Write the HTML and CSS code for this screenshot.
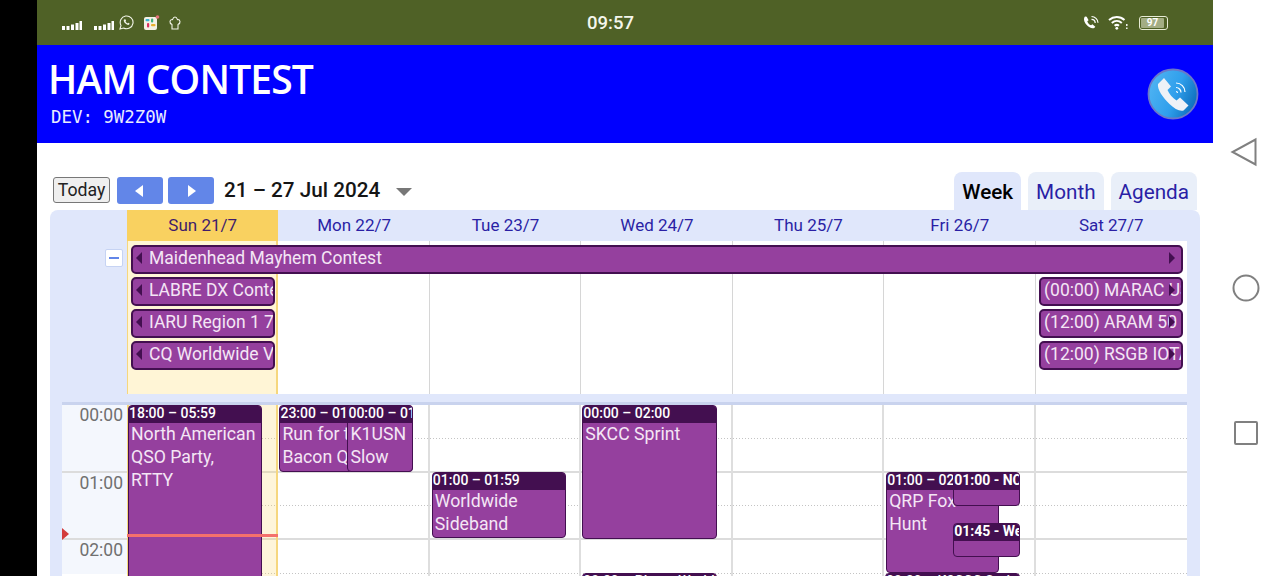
FILE: index.html
```html
<!DOCTYPE html>
<html lang="en">
<head>
  <meta charset="UTF-8" />
  <meta name="viewport" content="width=device-width, initial-scale=1.0" />
  <title>Ham Contest</title>
  <link rel="stylesheet" href="styles.css">
</head>
<body>
  <div class="screen">
    <div class="cutout"></div>

    <div class="app">
      <!-- Status bar -->
      <div class="status">
        <div class="status-left">
          <svg class="signal" width="20" height="9" viewBox="0 0 20 9"><path d="M0 5h3v4H0zM4.500 5h3v4h-3zM9 3.500h3V9H9zM13.500 2h3v7h-3zM17.500 0H20v9h-2.500z" fill="#fff"/></svg>
          <svg class="signal signal-two" width="20" height="9" viewBox="0 0 20 9"><path d="M0 5h3v4H0zM4.500 5h3v4h-3zM9 3.500h3V9H9zM13.500 2h3v7h-3zM17.500 0H20v9h-2.500z" fill="#fff"/></svg>
          <svg class="whatsapp" width="15" height="15" viewBox="0 0 15 15" fill="none" stroke="#f2f4e8" stroke-width="1.100"><path d="M1 14l1-3.600A6.400 6.400 0 1 1 4.600 13z"/><path d="M5 4.500c-.8 1 .2 3 1.500 4.100 1.300 1.100 3 1.800 3.700.8l.4-.8-1.500-.9-.7.700C7.600 8 6.900 7.300 6.500 6.300l.6-.7-.8-1.400z" fill="#f2f4e8" stroke="none"/></svg>
          <svg class="slack" width="17" height="16" viewBox="0 0 17 16">
            <rect x="1" y="2" width="13" height="13" rx="2" fill="#f4f1e6"/>
            <rect x="2.500" y="4" width="4" height="2.200" rx="1" fill="#39b5d6"/>
            <rect x="8" y="3.500" width="2.200" height="4" rx="1" fill="#3caf7c"/>
            <rect x="4" y="8" width="2.200" height="4.500" rx="1" fill="#d9315f"/>
            <rect x="8" y="9" width="4.500" height="2.200" rx="1" fill="#e8b02e"/>
            <circle cx="14.500" cy="2" r="1.800" fill="#e4727a"/>
          </svg>
          <svg class="hat" width="12" height="14" viewBox="0 0 12 14" fill="none" stroke="#f2f4e8" stroke-width="1.100"><path d="M3 13h6V8.500c1.300-.6 2.200-1.700 2-3C10.700 4 9.500 3.400 8.500 3.600 8 2.200 7 1 6 1S4 2.200 3.500 3.600C2.500 3.400 1.300 4 1 5.500.8 6.800 1.700 7.900 3 8.500z"/></svg>
        </div>
        <div class="clock">09:57</div>
        <div class="status-right">
          <svg class="call-wifi" width="17" height="15" viewBox="0 0 17 15" fill="none"><path d="M2 1.500c-1.800 2-1 5.500 1.500 8.300 2.600 2.900 6 4.300 8 2.900l.8-1-2.900-2.400-1.300 1C6.300 10 4.700 8 4.300 6.300l1.300-1.100-1.900-3.500z" fill="#fff"/><path d="M8.500 1.500a6.500 6.500 0 0 1 6.500 6.300M8.500 4.300a3.700 3.700 0 0 1 3.700 3.600" stroke="#fff" stroke-width="1.200"/></svg>
          <svg class="wifi" width="20" height="15" viewBox="0 0 20 15" fill="none" stroke="#fff" stroke-width="2"><path d="M1 5c4.600-4 11-4 15.500 0M3.800 8c3-2.600 7-2.600 10 0M6.600 10.800c1.400-1.200 3-1.200 4.400 0"/><circle cx="8.800" cy="13.300" r="1.400" fill="#fff" stroke="none"/><path d="M18.800 9v2M18.800 12.500v1.600" stroke-width="1.400"/></svg>
          <div class="battery"><span class="battery-level">97</span><span class="battery-rest"></span></div>
        </div>
      </div>

      <!-- Title bar -->
      <header class="titlebar">
        <div class="titlebar-text">
          <h1>HAM CONTEST</h1>
          <div class="dev">DEV: 9W2Z0W</div>
        </div>
        <svg class="phone-badge" width="52" height="52" viewBox="0 0 52 52">
          <defs>
            <linearGradient id="badgeFill" x1="0" y1="0.300" x2="1" y2="0.700">
              <stop offset="0" stop-color="#4fb3f2"/>
              <stop offset="0.550" stop-color="#2f9fec"/>
              <stop offset="1" stop-color="#0b6bb8"/>
            </linearGradient>
          </defs>
          <circle cx="26" cy="26" r="24.500" fill="url(#badgeFill)" stroke="#6a78c8" stroke-width="1.800"/>
          <path d="M11 16l6-6 7 8.500-3.500 3.500c1.500 3.500 5 8 9 10.500l3.500-3 8.500 8-5 5c-4 1-9-1.500-14-6.500C16 30 10 21 11 16z" fill="#eef2f7"/>
          <path d="M29 15a9 9 0 0 1 9 9M29 19.500a5 5 0 0 1 5 5M29 23.500a1.500 1.500 0 0 1 1.500 1.500" fill="none" stroke="#fff" stroke-width="1.200"/>
        </svg>
      </header>

      <main class="content">
        <div class="toolbar">
          <button class="btn-today">Today</button>
          <button class="btn-nav"><span class="arrow-left"></span></button>
          <button class="btn-nav"><span class="arrow-right"></span></button>
          <div class="range">21 – 27 Jul 2024</div>
          <span class="range-caret"></span>
          <div class="tabs">
            <div class="tab tab-active">Week</div>
            <div class="tab">Month</div>
            <div class="tab">Agenda</div>
          </div>
        </div>

        <div class="calendar">
          <div class="day-heads">
            <div class="day-head day-today">Sun 21/7</div>
            <div class="day-head">Mon 22/7</div>
            <div class="day-head">Tue 23/7</div>
            <div class="day-head">Wed 24/7</div>
            <div class="day-head">Thu 25/7</div>
            <div class="day-head">Fri 26/7</div>
            <div class="day-head">Sat 27/7</div>
          </div>

          <div class="allday">
            <div class="allday-gutter"><span class="collapse"><i></i></span></div>
            <div class="allday-grid">
              <div class="allday-col col-today"></div>
              <div class="allday-col"></div>
              <div class="allday-col"></div>
              <div class="allday-col"></div>
              <div class="allday-col"></div>
              <div class="allday-col"></div>
              <div class="allday-col"></div>

              <div class="bar bar-all"><span class="tip-left"></span><span class="bar-text">Maidenhead Mayhem Contest</span><span class="tip-right"></span></div>
              <div class="bar bar-sun bar-r2"><span class="tip-left"></span><span class="bar-text">LABRE DX Contest</span></div>
              <div class="bar bar-sun bar-r3"><span class="tip-left"></span><span class="bar-text">IARU Region 1 7MHz</span></div>
              <div class="bar bar-sun bar-r4"><span class="tip-left"></span><span class="bar-text">CQ Worldwide VHF</span></div>
              <div class="bar bar-sat bar-r2"><span class="bar-text">(00:00) MARAC US</span><span class="tip-right tip-over"></span></div>
              <div class="bar bar-sat bar-r3"><span class="bar-text">(12:00) ARAM 50</span><span class="tip-right tip-over"></span></div>
              <div class="bar bar-sat bar-r4"><span class="bar-text">(12:00) RSGB IOTA</span><span class="tip-right tip-over"></span></div>
            </div>
          </div>

          <div class="timegrid">
            <div class="slot slot-half"><div class="slot-label">00:00</div><div class="slot-lane"></div></div>
            <div class="slot slot-hour"><div class="slot-label"></div><div class="slot-lane"></div></div>
            <div class="slot slot-half"><div class="slot-label">01:00</div><div class="slot-lane"></div></div>
            <div class="slot slot-hour"><div class="slot-label"></div><div class="slot-lane"></div></div>
            <div class="slot slot-half"><div class="slot-label">02:00</div><div class="slot-lane"></div></div>

            <div class="now-arrow"></div>

            <div class="columns">
              <div class="column col-today">
                <div class="event" style="left:-1px;width:134px;top:0;height:190px">
                  <div class="event-time">18:00 – 05:59</div>
                  <div class="event-title">North American QSO Party, RTTY</div>
                </div>
                <div class="now-line"></div>
              </div>
              <div class="column">
                <div class="event" style="left:1px;width:134px;top:0;height:67px">
                  <div class="event-time">23:00 – 01:00</div>
                  <div class="event-title">Run for the Bacon QRP</div>
                </div>
                <div class="event" style="left:69px;width:66px;top:0;height:67px">
                  <div class="event-time">00:00 – 01:00</div>
                  <div class="event-title">K1USN Slow</div>
                </div>
              </div>
              <div class="column">
                <div class="event" style="left:2px;width:134px;top:67px;height:66px">
                  <div class="event-time">01:00 – 01:59</div>
                  <div class="event-title">Worldwide Sideband</div>
                </div>
              </div>
              <div class="column">
                <div class="event" style="left:1px;width:135px;top:0;height:134px">
                  <div class="event-time">00:00 – 02:00</div>
                  <div class="event-title">SKCC Sprint</div>
                </div>
                <div class="event" style="left:1px;width:135px;top:168px;height:40px">
                  <div class="event-time">02:30 – Planet Worldwide</div>
                </div>
              </div>
              <div class="column"></div>
              <div class="column">
                <div class="event" style="left:2px;width:113px;top:67px;height:101px">
                  <div class="event-time">01:00 – 02:30</div>
                  <div class="event-title">QRP Fox Hunt</div>
                </div>
                <div class="event" style="left:69px;width:67px;top:67px;height:34px">
                  <div class="event-time event-time-bold">01:00 - NCCC</div>
                </div>
                <div class="event" style="left:69px;width:67px;top:118px;height:34px">
                  <div class="event-time event-time-bold">01:45 - Weekly</div>
                </div>
                <div class="event" style="left:1px;width:135px;top:168px;height:40px">
                  <div class="event-time">02:30 – K3CCC Sprint</div>
                </div>
              </div>
              <div class="column"></div>
            </div>
          </div>
        </div>
      </main>
    </div>

    <!-- Android navigation -->
    <nav class="navkeys">
      <svg class="key-back" width="28" height="30" viewBox="0 0 28 30" fill="none" stroke="#808080" stroke-width="2"><path d="M25.500 2.500v25L2.500 15z"/></svg>
      <svg width="28" height="28" viewBox="0 0 28 28" fill="none" stroke="#808080" stroke-width="2"><circle cx="14" cy="14" r="12.500"/></svg>
      <svg class="key-recent" width="24" height="24" viewBox="0 0 24 24" fill="none" stroke="#808080" stroke-width="2"><rect x="1" y="1" width="22" height="22" rx="1"/></svg>
    </nav>
  </div>
</body>
</html>
```

FILE: styles.css
```css
:root {
  --cal-bg: #e0e7fb;
  --event: #95409e;
  --event-dark: #430f50;
  --link-blue: #2a1fa5;
  --line: #d6d6d6;
  --today-soft: #fff5d6;
  --today-line: #f6d77e;
}

* {
  box-sizing: border-box;
  margin: 0;
  padding: 0;
}

html, body {
  height: 576px;
  overflow: hidden;
  background: #fff;
}

body {
  font-family: 'Roboto', sans-serif;
}

.screen {
  display: flex;
  height: 576px;
  overflow: hidden;
}

.cutout {
  width: 37px;
  flex: none;
  background: #000;
}

.app {
  width: 1176px;
  flex: none;
  display: flex;
  flex-direction: column;
}

/* Status bar */
.status {
  height: 45px;
  flex: none;
  background: #4f6126;
  color: #fff;
  display: flex;
  align-items: center;
  justify-content: space-between;
  position: relative;
  padding: 0 45px 0 25px;
}

.status-left, .status-right {
  display: flex;
  align-items: center;
}

.signal {
  margin-top: 6px;
}

.signal-two {
  margin-left: 12px;
}

.whatsapp {
  margin-left: 5px;
}

.slack {
  margin-left: 9px;
}

.hat {
  margin-left: 9px;
}

.clock {
  position: absolute;
  left: 550px;
  top: 11px;
  font-size: 18.500px;
  font-weight: 500;
  line-height: 24px;
  color: #f4f6ec;
}

.call-wifi {
  margin-right: 8px;
}

.wifi {
  margin-right: 11px;
}

.battery {
  width: 29px;
  height: 14px;
  border: 1px solid #e7ebd4;
  border-radius: 3px;
  padding: 1px;
  display: flex;
}

.battery-level {
  flex: 1;
  background: #a3ad84;
  border-radius: 1px;
  color: #fff;
  font-size: 10px;
  font-weight: 700;
  line-height: 10px;
  text-align: center;
}

.battery-rest {
  width: 2px;
  flex: none;
}

/* Title bar */
.titlebar {
  height: 98px;
  flex: none;
  background: #0000ff;
  display: flex;
  align-items: center;
  justify-content: space-between;
  padding: 0 14px 0 11px;
}

.titlebar-text {
  align-self: flex-start;
  padding-top: 13px;
}

.titlebar h1 {
  font-family: 'Open Sans', sans-serif;
  font-size: 39px;
  font-weight: 600;
  line-height: 42px;
  color: #fff;
  letter-spacing: -0.850px;
}

.dev {
  font-family: 'DejaVu Sans Mono', monospace;
  font-size: 17.400px;
  line-height: 20px;
  color: #e8ecff;
  margin: 7px 0 0 3px;
}

/* Calendar toolbar */
.content {
  flex: 1;
  padding: 29px 13px 0;
  min-height: 0;
}

.toolbar {
  height: 38px;
  display: flex;
  align-items: flex-start;
  padding-left: 3px;
  position: relative;
}

.btn-today {
  width: 57px;
  height: 26px;
  margin-top: 5px;
  font-family: inherit;
  font-size: 17.700px;
  color: #222;
  background: #efefef;
  border: 1px solid #777;
  border-radius: 3px;
}

.btn-nav {
  width: 46px;
  height: 27px;
  margin: 5px 0 0 7px;
  background: #6286e8;
  border: none;
  border-radius: 3px;
  display: flex;
  align-items: center;
  justify-content: center;
}

.btn-nav + .btn-nav {
  margin-left: 5px;
}

.arrow-left {
  margin-right: 3px;
  border-right: 8px solid #fff;
  border-top: 6.500px solid transparent;
  border-bottom: 6.500px solid transparent;
}

.arrow-right {
  margin-left: 1px;
  border-left: 8px solid #fff;
  border-top: 6.500px solid transparent;
  border-bottom: 6.500px solid transparent;
}

.range {
  margin: 5px 0 0 10px;
  font-size: 20.700px;
  font-weight: 500;
  line-height: 26px;
  color: #151515;
}

.range-caret {
  margin: 16px 0 0 16px;
  border-top: 8px solid #777;
  border-left: 8px solid transparent;
  border-right: 8px solid transparent;
}

.tabs {
  margin-left: auto;
  margin-right: 3px;
  display: flex;
  gap: 7px;
}

.tab {
  height: 38px;
  padding: 0 8px;
  font-size: 20.700px;
  line-height: 41px;
  color: var(--link-blue);
  background: #e9eff9;
  border-radius: 8px 8px 0 0;
}

.tab-active {
  color: #000;
  font-weight: 500;
  background: var(--cal-bg);
}

/* Calendar body */
.calendar {
  height: 366px;
  background: var(--cal-bg);
  border-radius: 8px 8px 0 0;
  padding-right: 13px;
}

.day-heads {
  height: 31px;
  margin-left: 77px;
  display: grid;
  grid-template-columns: repeat(7, 1fr);
}

.day-head {
  text-align: center;
  font-size: 17px;
  line-height: 31px;
  color: var(--link-blue);
}

.day-today {
  background: #f9d160;
  color: #3f1c6b;
}

.allday {
  height: 153px;
  display: flex;
}

.allday-gutter {
  width: 77px;
  flex: none;
  padding: 8px 0 0 55px;
}

.collapse {
  width: 18px;
  height: 18px;
  background: #fff;
  border: 1px solid #c6d3f3;
  border-radius: 2px;
  display: flex;
  align-items: center;
  justify-content: center;
}

.collapse i {
  width: 10px;
  height: 2px;
  background: #6286e8;
}

.allday-grid {
  flex: 1;
  display: grid;
  grid-template-columns: repeat(7, 1fr);
  grid-template-rows: 32px 32px 32px 32px 1fr;
  background: #fff;
}

.allday-col {
  grid-row: 1 / 6;
  border-right: 1px solid var(--line);
}

.allday-col:nth-child(1) {
  grid-column: 1;
}

.allday-col:nth-child(2) {
  grid-column: 2;
}

.allday-col:nth-child(3) {
  grid-column: 3;
}

.allday-col:nth-child(4) {
  grid-column: 4;
}

.allday-col:nth-child(5) {
  grid-column: 5;
}

.allday-col:nth-child(6) {
  grid-column: 6;
}

.allday-col:nth-child(7) {
  grid-column: 7;
  border-right: none;
}

.allday-col.col-today {
  background: var(--today-soft);
  border-left: 1px solid var(--today-line);
  border-right: 2px solid var(--today-line);
}

.bar {
  align-self: start;
  height: 29px;
  margin: 4px 4px 0 4px;
  background: var(--event);
  border: 2px solid var(--event-dark);
  border-radius: 5px;
  color: #f4e6f5;
  font-size: 17.500px;
  line-height: 23px;
  display: flex;
  align-items: flex-start;
  overflow: hidden;
  position: relative;
  white-space: nowrap;
}

.bar-all {
  grid-row: 1;
  grid-column: 1 / 8;
}

.bar-sun {
  grid-column: 1;
  margin-right: 3px;
}

.bar-sat {
  grid-column: 7;
  margin-left: 3.500px;
}

.bar-r2 {
  grid-row: 2;
}

.bar-r3 {
  grid-row: 3;
}

.bar-r4 {
  grid-row: 4;
}

.bar-text {
  padding-left: 5px;
  flex: 1;
  overflow: hidden;
}

.bar-sat .bar-text {
  padding-left: 3px;
}

.tip-left {
  flex: none;
  margin: 5px 2px 0 3px;
  border-right: 6px solid var(--event-dark);
  border-top: 6px solid transparent;
  border-bottom: 6px solid transparent;
}

.tip-right {
  flex: none;
  margin: 5px 6px 0 0;
  border-left: 6px solid var(--event-dark);
  border-top: 6px solid transparent;
  border-bottom: 6px solid transparent;
}

.tip-over {
  position: absolute;
  right: 0;
  top: 0;
}

/* Time grid */
.timegrid {
  margin: 8px 0 0 12px;
  border-top: 3px solid #c9d3ee;
  background: #fff;
  position: relative;
  height: 174px;
}

.slot {
  display: flex;
  height: 33.750px;
}

.slot-label {
  width: 65px;
  flex: none;
  background: #f4f7fd;
  text-align: right;
  padding-right: 4px;
  font-size: 17.500px;
  line-height: 21px;
  color: #707070;
}

.slot-lane {
  flex: 1;
}

/* half hour rule, drawn as a gradient so the dots stay crisp */
.slot-half .slot-lane {
  background: repeating-linear-gradient(90deg, #c4c4c4 0 1px, transparent 1px 3px) left bottom / 100% 1px no-repeat;
}

.slot-hour .slot-label, .slot-hour .slot-lane {
  border-bottom: 2px solid #dcdcdc;
}

.columns {
  position: absolute;
  top: 0;
  left: 65px;
  right: 0;
  bottom: 0;
  display: grid;
  grid-template-columns: repeat(7, 1fr);
}

.column {
  position: relative;
  border-right: 2px solid #dedede;
}

.column:last-child {
  border-right: none;
}

.column.col-today {
  background: rgba(250, 212, 100, 0.24);
  border-left: 2px solid var(--today-line);
  border-right: 2px solid var(--today-line);
}

.event {
  position: absolute;
  background: var(--event);
  border: 1px solid var(--event-dark);
  border-radius: 4px;
  overflow: hidden;
  color: #f4e6f5;
}

.event-time {
  height: 17px;
  background: var(--event-dark);
  color: #fff;
  font-size: 14px;
  font-weight: 500;
  line-height: 15px;
  white-space: nowrap;
  overflow: hidden;
}

.event-time-bold {
  font-weight: 700;
}

.event-title {
  font-size: 17.700px;
  line-height: 23px;
  padding: 0 2px;
}

.now-arrow {
  position: absolute;
  left: 0;
  top: 123px;
  border-left: 7px solid #d33b3b;
  border-top: 6px solid transparent;
  border-bottom: 6px solid transparent;
}

.now-line {
  position: absolute;
  left: -2px;
  right: -2px;
  top: 129px;
  height: 3px;
  background: #f4716c;
}

/* Android navigation */
.navkeys {
  flex: 1;
  display: flex;
  flex-direction: column;
  align-items: center;
  padding: 137px 2px 0 0;
  gap: 107px;
  background: #fff;
}

.key-back {
  margin-right: 4px;
}

.key-recent {
  margin-top: 12px;
}
```
